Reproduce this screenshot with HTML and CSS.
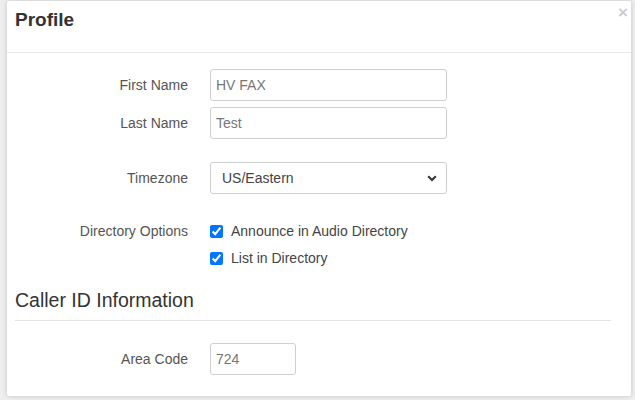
FILE: index.html
```html
<!DOCTYPE html>
<html lang="en">
<head>
<meta charset="utf-8">
<title>Profile</title>
<link rel="stylesheet" href="styles.css">
</head>
<body>
<div class="modal">
  <div class="modal-header">
    <h1 class="title">Profile</h1>
    <span class="close">×</span>
  </div>
  <div class="modal-body">
    <div class="row">
      <label class="lbl">First Name</label>
      <input class="field" type="text" value="HV FAX">
    </div>
    <div class="row row-tight">
      <label class="lbl">Last Name</label>
      <input class="field" type="text" value="Test">
    </div>
    <div class="row row-select">
      <label class="lbl">Timezone</label>
      <div class="select-wrap">
        <select class="field select"><option>US/Eastern</option></select>
        <svg class="chev" width="10" height="7" viewBox="0 0 10 7"><path d="M1.2 1.3 L5 5 L8.8 1.3" fill="none" stroke="#333" stroke-width="2"/></svg>
      </div>
    </div>
    <div class="row row-options">
      <label class="lbl">Directory Options</label>
      <div class="checks">
        <label class="check"><input type="checkbox" checked> Announce in Audio Directory</label>
        <label class="check"><input type="checkbox" checked> List in Directory</label>
      </div>
    </div>
    <h2 class="section">Caller ID Information</h2>
    <div class="row">
      <label class="lbl">Area Code</label>
      <input class="field short" type="text" value="724">
    </div>
  </div>
</div>
</body>
</html>
```
FILE: styles.css
```css
html, body {
  margin: 0;
  padding: 0;
}
body {
  background: #eeeeee;
  font-family: "Liberation Sans", Arial, sans-serif;
  width: 635px;
  height: 400px;
  overflow: hidden;
}
.modal {
  position: relative;
  box-sizing: border-box;
  margin: 1px 0 0 7px;
  width: 624px;
  height: 395px;
  background: #fff;
  border-radius: 2px;
  box-shadow: 0 0 5px rgba(0, 0, 0, 0.18);
}
.modal-header {
  box-sizing: border-box;
  height: 52px;
  border-bottom: 1px solid #e8e8e8;
  padding: 8px 8px 0 8px;
}
.title {
  margin: 0;
  font-size: 19px;
  line-height: 22px;
  font-weight: bold;
  color: #333;
}
.close {
  position: absolute;
  top: 2px;
  right: 3px;
  font-size: 17px;
  font-weight: bold;
  color: #cccccc;
  line-height: 20px;
}
.modal-body {
  padding: 16px 8px 0 8px;
}
.row {
  display: grid;
  grid-template-columns: 173px auto;
  column-gap: 22px;
  align-items: center;
}
.row-tight {
  margin-top: 6px;
}
.row-select {
  margin-top: 23px;
}
.row-options {
  margin-top: 27px;
  align-items: start;
}
.lbl {
  text-align: right;
  font-size: 14px;
  line-height: 20px;
  color: #555;
}
.field {
  box-sizing: border-box;
  width: 237px;
  height: 32px;
  border: 1px solid #cfcfcf;
  border-radius: 3px;
  padding: 0 5px;
  font-family: "Liberation Sans", Arial, sans-serif;
  font-size: 14px;
  color: #777;
  background: #fff;
  outline: none;
}
.short {
  width: 86px;
}
.select-wrap {
  position: relative;
  width: 237px;
}
.select {
  display: block;
  appearance: none;
  -webkit-appearance: none;
  padding: 0 11px;
  color: #444;
}
.chev {
  position: absolute;
  right: 10px;
  top: 13px;
}
.checks {
  display: flex;
  flex-direction: column;
  gap: 7px;
}
.check {
  display: flex;
  align-items: center;
  font-size: 14px;
  line-height: 20px;
  color: #444;
}
.check input {
  width: 13px;
  height: 13px;
  margin: 0 8px 0 0;
  accent-color: #0075ff;
}
.section {
  margin: 21px 12px 22px 0;
  padding-bottom: 9px;
  border-bottom: 1px solid #e3e3e3;
  font-size: 19.5px;
  line-height: 22px;
  font-weight: normal;
  color: #333;
}
```
